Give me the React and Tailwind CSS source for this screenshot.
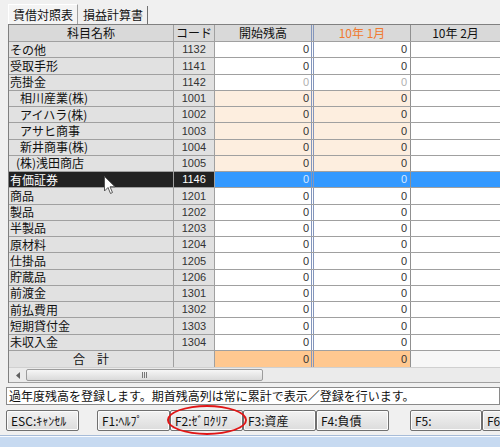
import React from "react";

const rows = [
  { name: "その他", code: "1132" },
  { name: "受取手形", code: "1141" },
  { name: "売掛金", code: "1142", dim: true },
  { name: "相川産業(株)", code: "1001", sub: true },
  { name: "アイハラ(株)", code: "1002", sub: true },
  { name: "アサヒ商事", code: "1003", sub: true },
  { name: "新井商事(株)", code: "1004", sub: true },
  { name: "(株)浅田商店", code: "1005", sub: true, tight: true },
  { name: "有価証券", code: "1146", selected: true },
  { name: "商品", code: "1201" },
  { name: "製品", code: "1202" },
  { name: "半製品", code: "1203" },
  { name: "原材料", code: "1204" },
  { name: "仕掛品", code: "1205" },
  { name: "貯蔵品", code: "1206" },
  { name: "前渡金", code: "1301" },
  { name: "前払費用", code: "1302" },
  { name: "短期貸付金", code: "1303" },
  { name: "未収入金", code: "1304" },
];

const jp = "font-['MS_UI_Gothic','Noto_Sans_CJK_JP',sans-serif]";
const num = "font-['Liberation_Sans',Arial,sans-serif]";

const GridRow = ({ row }) => {
  const nameBg = row.selected ? "bg-[#222222] text-white" : "bg-[#e1e1e1] text-[#111]";
  let dataBg = "bg-white";
  let lastBg = "bg-white";
  let numColor = row.dim ? "text-[#b0b0b0]" : "text-[#333]";
  if (row.sub) dataBg = "bg-[#fdeedf]";
  if (row.selected) {
    dataBg = "bg-[#3399ff]";
    lastBg = "bg-[#3399ff]";
    numColor = "text-[#d8e8ff]";
  }

  return (
    <div className="flex h-[16.25px] border-b border-[#a0a0a0]">
      <div
        className={`w-[165px] shrink-0 border-r border-[#a0a0a0] flex items-center text-[12px] leading-none ${nameBg} ${
          row.sub ? (row.tight ? "pl-[7px]" : "pl-[11px]") : "pl-[1px]"
        }`}
      >
        {row.name}
      </div>
      <div
        className={`w-[41px] shrink-0 border-r border-[#a0a0a0] flex items-center justify-center text-[11px] ${num} ${nameBg} ${
          row.selected ? "" : "text-[#333]"
        }`}
      >
        {row.code}
      </div>
      <div
        className={`w-[99px] shrink-0 border-r-[3px] border-double border-[#8496bc] flex items-center justify-end pr-[2px] text-[11px] ${num} ${dataBg} ${numColor}`}
      >
        0
      </div>
      <div
        className={`w-[97px] shrink-0 border-r border-[#909090] flex items-center justify-end pr-[3px] text-[11px] ${num} ${dataBg} ${numColor}`}
      >
        0
      </div>
      <div className={`flex-1 ${lastBg}`} />
    </div>
  );
};

const Btn = ({ label, w = "w-[73px]" }) => (
  <div
    className={`${w} h-[21px] shrink-0 border border-[#707070] rounded-[2px] bg-gradient-to-b from-[#f2f2f2] to-[#dcdcdc] flex items-center pl-[4px] text-[12px] text-[#111] shadow-[inset_0_0_0_1px_#fcfcfc]`}
  >
    {label}
  </div>
);

export default function App() {
  return (
    <div className={`relative w-[500px] h-[447px] overflow-hidden bg-[#f0f0f0] ${jp} text-[#111]`}>
      {/* タブ */}
      <div className="flex items-end h-[24px] pl-[8px]">
        <div className="h-[20px] px-[4px] border-t border-l border-white border-r border-r-[#a0a0a0] flex items-center text-[12px] bg-[#f4f4f4]">
          賃借対照表
        </div>
        <div className="h-[18px] px-[4px] ml-[1px] border-r border-[#707070] flex items-center text-[12px]">
          損益計算書
        </div>
      </div>

      {/* グリッド */}
      <div className="ml-[8px] border-l border-t border-[#808080]">
        <div className="flex h-[17px] border-b border-[#a0a0a0] bg-[#d9d9d9] text-[12px]">
          <div className="w-[165px] shrink-0 border-r border-[#a0a0a0] flex items-center justify-center">
            科目名称
          </div>
          <div className="w-[41px] shrink-0 border-r border-[#a0a0a0] flex items-center justify-center">
            コード
          </div>
          <div className="w-[99px] shrink-0 border-r-[3px] border-double border-[#8496bc] flex items-center justify-center">
            開始残高
          </div>
          <div className="w-[97px] shrink-0 border-r border-[#909090] flex items-center justify-center text-[#f07a30]">
            10年 1月
          </div>
          <div className="flex-1 flex items-center justify-center">10年 2月</div>
        </div>

        {rows.map((row) => (
          <GridRow key={row.code} row={row} />
        ))}

        {/* 合計 */}
        <div className="flex h-[16.25px]">
          <div className="w-[165px] shrink-0 border-r border-[#a0a0a0] bg-[#e1e1e1] flex items-center justify-center text-[12px]">
            合　計
          </div>
          <div className="w-[41px] shrink-0 border-r border-[#a0a0a0] bg-[#e1e1e1]" />
          <div className={`w-[99px] shrink-0 border-r-[3px] border-double border-[#8496bc] bg-[#ffc890] flex items-center justify-end pr-[2px] text-[11px] text-[#333] ${num}`}>
            0
          </div>
          <div className={`w-[97px] shrink-0 border-r border-[#909090] bg-[#ffc890] flex items-center justify-end pr-[3px] text-[11px] text-[#333] ${num}`}>
            0
          </div>
          <div className="flex-1 bg-[#f7f7f7]" />
        </div>

        {/* スクロールバー */}
        <div className="flex h-[16px] bg-[#ebebeb] border-t border-[#d0d0d0] border-b border-b-[#a0a0a0]">
          <div className="w-[17px] shrink-0 flex items-center justify-center">
            <svg width="4" height="7" viewBox="0 0 4 7">
              <path d="M4 0 L0 3.5 L4 7 Z" fill="#606060" />
            </svg>
          </div>
          <div className="w-[237px] shrink-0 my-[1px] border border-[#9c9c9c] rounded-[2px] bg-gradient-to-b from-[#f6f6f6] to-[#dadada] flex items-center justify-center">
            <div className="flex gap-[1px]">
              <div className="w-[1px] h-[6px] bg-[#777]" />
              <div className="w-[1px] h-[6px] bg-[#777]" />
              <div className="w-[1px] h-[6px] bg-[#777]" />
            </div>
          </div>
          <div className="flex-1" />
        </div>
      </div>

      {/* ステータス */}
      <div className="ml-[6px] mt-[4px] h-[18px] border border-[#8a8a8a] bg-white flex items-center pl-[2px] text-[12px] whitespace-nowrap overflow-hidden">
        過年度残高を登録します。期首残高列は常に累計で表示／登録を行います。
      </div>

      {/* ファンクションキー */}
      <div className="flex mt-[5px] pl-[6px]">
        <Btn label="ESC:ｷｬﾝｾﾙ" />
        <div className="w-[18px] shrink-0" />
        <Btn label="F1:ﾍﾙﾌﾟ" />
        <Btn label="F2:ｾﾞﾛｸﾘｱ" />
        <Btn label="F3:資産" />
        <Btn label="F4:負債" />
        <div className="w-[21px] shrink-0" />
        <Btn label="F5:" w="w-[72px]" />
        <Btn label="F6" />
      </div>

      {/* 下部バー */}
      <div className="absolute left-0 right-0 bottom-0 h-[11px] border-t border-[#f8fbff] bg-[#c7daf1] shadow-[0_-1px_0_#a7bcd8]" />

      {/* マウスカーソル */}
      <svg className="absolute left-[104px] top-[176px]" width="12" height="19" viewBox="0 0 12 19">
        <path d="M0.5 0.5 L0.5 15 L4 11.5 L6.5 17.5 L8.5 16.5 L6 10.8 L11 10.8 Z" fill="#fff" stroke="#555" strokeWidth="1" />
      </svg>

      {/* 赤丸 */}
      <div className="absolute left-[167px] top-[405px] w-[80px] h-[30px] rounded-[50%] border-2 border-[#e01515]" />
    </div>
  );
}
